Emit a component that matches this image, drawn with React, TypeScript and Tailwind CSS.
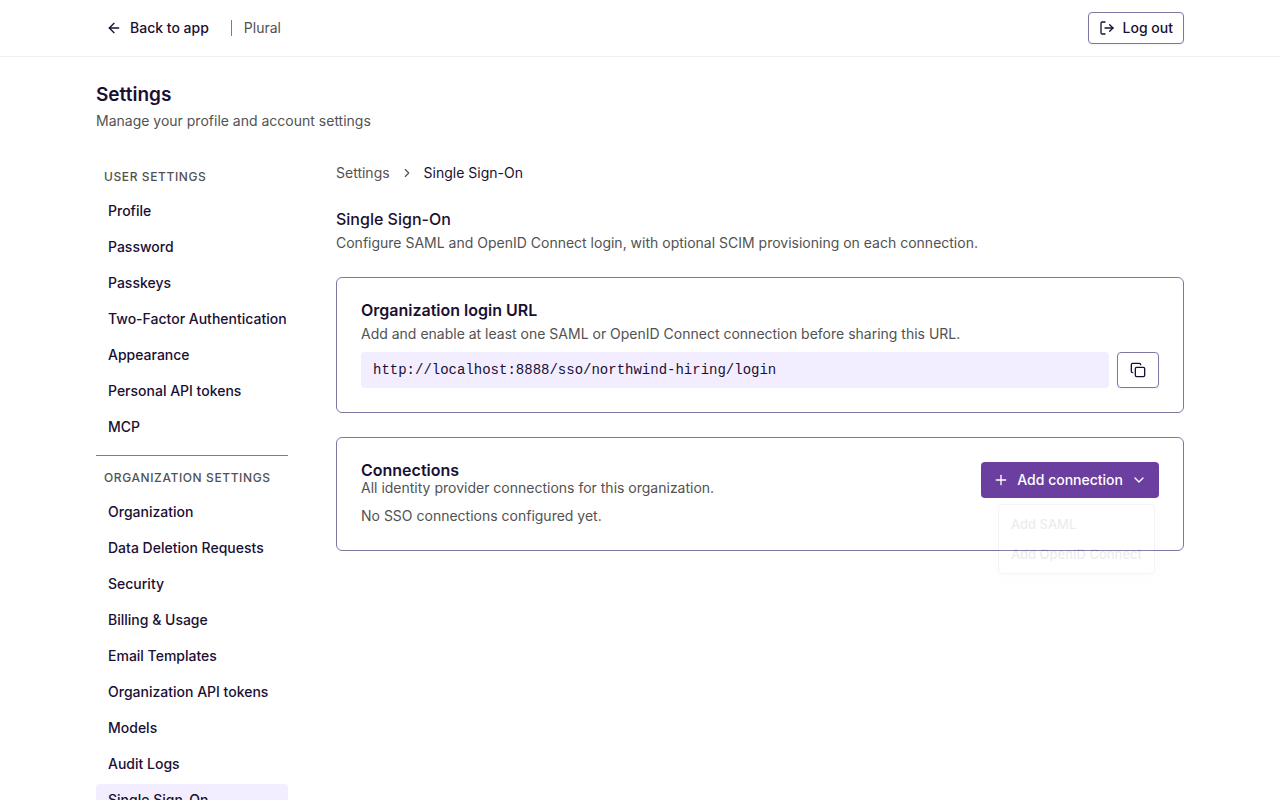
import { useState } from "react";
import {
  ArrowLeft,
  ChevronDown,
  ChevronRight,
  Copy,
  LogOut,
  Plus,
} from "lucide-react";

const userLinks = [
  "Profile",
  "Password",
  "Passkeys",
  "Two-Factor Authentication",
  "Appearance",
  "Personal API tokens",
  "MCP",
];

const organizationLinks = [
  "Organization",
  "Data Deletion Requests",
  "Security",
  "Billing & Usage",
  "Email Templates",
  "Organization API tokens",
  "Models",
  "Audit Logs",
  "Single Sign-On",
];

type NavGroupProps = {
  title: string;
  links: string[];
  active: string;
};

function NavGroup({ title, links, active }: NavGroupProps) {
  return (
    <div className="flex flex-col gap-1">
      <h2 className="px-2 py-1.5 text-xs font-medium tracking-wider text-[#525252] uppercase">
        {title}
      </h2>
      {links.map((link) => (
        <a
          key={link}
          href="#"
          className={
            link === active
              ? "rounded bg-[#f3eeff] px-3 py-1.5 font-medium whitespace-nowrap"
              : "rounded px-3 py-1.5 font-medium whitespace-nowrap hover:bg-[#f3eeff]"
          }
        >
          {link}
        </a>
      ))}
    </div>
  );
}

export default function App() {
  const [loginUrl] = useState<string>(
    "http://localhost:8888/sso/northwind-hiring/login"
  );

  return (
    <div className="min-h-screen bg-white font-['Inter',sans-serif] text-sm text-[#1a1033]">
      <header className="border-b border-[#f1eff6] px-24">
        <div className="flex h-14 items-center gap-3">
          <a href="#" className="flex items-center gap-2 px-2.5 font-medium">
            <ArrowLeft size={16} />
            Back to app
          </a>
          <div className="h-4 w-px bg-[#7f77a3]" />
          <span className="text-[#525252]">Plural</span>
          <button className="ml-auto flex h-8 items-center gap-2 rounded border border-[#7f77a3] px-2.5 font-medium shadow-xs">
            <LogOut size={16} />
            Log out
          </button>
        </div>
      </header>

      <div className="px-24 py-6">
        <div className="flex flex-col gap-0.5">
          <h1 className="text-[19px] leading-7 font-semibold">Settings</h1>
          <p className="text-[#525252]">
            Manage your profile and account settings
          </p>
        </div>

        <div className="mt-8 flex gap-12">
          <nav className="w-48 shrink-0">
            <NavGroup
              title="User settings"
              links={userLinks}
              active="Single Sign-On"
            />
            <hr className="mt-3 mb-2 border-[#7f77a3]" />
            <NavGroup
              title="Organization settings"
              links={organizationLinks}
              active="Single Sign-On"
            />
          </nav>

          <main className="flex min-w-0 flex-1 flex-col gap-6">
            <div className="flex items-center gap-2.5">
              <a href="#" className="text-[#525252]">
                Settings
              </a>
              <ChevronRight size={14} className="text-[#525252]" />
              <span>Single Sign-On</span>
            </div>

            <div className="flex flex-col gap-0.5">
              <h2 className="text-base font-medium">Single Sign-On</h2>
              <p className="text-[#525252]">
                Configure SAML and OpenID Connect login, with optional SCIM
                provisioning on each connection.
              </p>
            </div>

            <section className="rounded-md border border-[#7f77a3] p-6">
              <h3 className="text-base leading-4 font-semibold">
                <label htmlFor="login-url">Organization login URL</label>
              </h3>
              <p className="mt-1.5 text-[#525252]">
                Add and enable at least one SAML or OpenID Connect connection
                before sharing this URL.
              </p>
              <div className="mt-2 flex gap-2">
                <input
                  id="login-url"
                  type="text"
                  readOnly
                  value={loginUrl}
                  className="h-9 min-w-0 flex-1 rounded-sm bg-[#f3eeff] px-3 font-['Liberation_Mono',monospace]"
                />
                <button
                  aria-label="Copy login URL"
                  className="grid h-9 w-[42px] place-content-center rounded border border-[#7f77a3] shadow-xs"
                >
                  <Copy size={16} />
                </button>
              </div>
            </section>

            <section className="rounded-md border border-[#7f77a3] p-6">
              <div className="flex items-start justify-between">
                <div>
                  <h3 className="text-base leading-4 font-semibold">
                    Connections
                  </h3>
                  <p className="text-[#525252]">
                    All identity provider connections for this organization.
                  </p>
                </div>
                <div className="relative">
                  <button className="flex h-9 items-center gap-2 rounded-sm bg-[#6b3fa0] px-3 font-medium text-white">
                    <Plus size={16} />
                    Add connection
                    <ChevronDown size={16} />
                  </button>
                  {/* menu is caught part way through its fade */}
                  <div className="absolute top-full right-1 mt-1.5 flex flex-col rounded border border-[#7f77a3] bg-white p-1 text-[13px] leading-[18px] font-medium whitespace-nowrap opacity-8 shadow-md">
                    <button className="px-2 py-1.5 text-left">Add SAML</button>
                    <button className="px-2 py-1.5 text-left">
                      Add OpenID Connect
                    </button>
                  </div>
                </div>
              </div>
              <p className="mt-2 text-[#525252]">
                No SSO connections configured yet.
              </p>
            </section>
          </main>
        </div>
      </div>
    </div>
  );
}
